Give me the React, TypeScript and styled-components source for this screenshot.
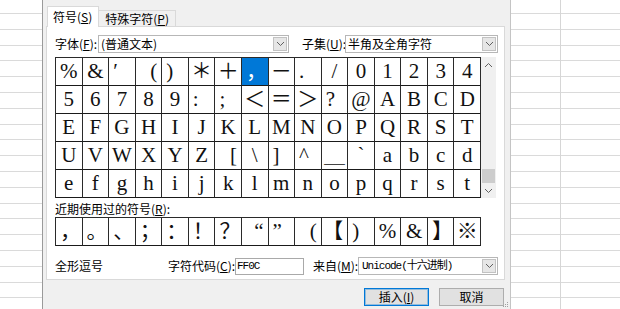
import React from "react";
import styled, { createGlobalStyle } from "styled-components";

type J = "s" | "c" | "e";
type Sym = { c: string; j: J; sel?: boolean };

const s = (c: string, j: J = "c", sel = false): Sym => ({ c, j, sel });
const plain = (str: string) => str.split("").map((c) => s(c));

const symbolRows: Sym[][] = [
  [
    s("%"), s("&"), s("′", "s"), s("(", "e"), s(")", "s"), s("＊"), s("＋"),
    s("，", "s", true), s("－"), s(".", "s"), s("/"), ...plain("01234"),
  ],
  [
    ...plain("56789"), s(":", "s"), s(";", "s"), s("＜"), s("＝"), s("＞"),
    s("?", "s"), s("@"), ...plain("ABCD"),
  ],
  plain("EFGHIJKLMNOPQRST"),
  [
    ...plain("UVWXYZ"), s("[", "e"), s("\\"), s("]", "s"), s("^", "s"),
    s("＿"), s("`"), ...plain("abcd"),
  ],
  plain("efghijklmnopqrst"),
];

const recent: Sym[] = [
  s("，", "s"), s("。", "s"), s("、", "s"), s("；", "s"), s("：", "s"),
  s("！", "s"), s("？", "s"), s("“", "e"), s("”", "s"), s("(", "e"),
  s("【", "e"), s(")", "s"), s("%"), s("&"), s("】", "s"), s("※"),
];

// spreadsheet row lines behind the dialog
const sheetRowHeights = (() => {
  const out: number[] = [];
  let prev = -1;
  for (let i = 0; i < 20; i++) {
    const line = Math.round(13 + 15.8 * i);
    out.push(line - prev);
    prev = line;
  }
  return out;
})();

const GlobalStyle = createGlobalStyle`
  html, body { margin: 0; padding: 0; background: #fff; }
  body {
    font-family: "Noto Sans CJK SC", "Noto Sans", sans-serif;
    font-size: 12px;
    color: #000;
    overflow: hidden;
  }
`;

const Page = styled.div`
  display: flex;
  width: 620px;
  height: 309px;
  overflow: hidden;
`;

const SheetCol = styled.div<{ $w?: number; $line?: boolean }>`
  display: flex;
  flex-direction: column;
  flex: ${(p) => (p.$w ? "none" : "1")};
  width: ${(p) => (p.$w ? `${p.$w}px` : "auto")};
  box-sizing: border-box;
  border-right: ${(p) => (p.$line ? "1px solid #d6d6d6" : "none")};
  background: #fff;
`;

const SheetRow = styled.div<{ $h: number }>`
  flex: none;
  height: ${(p) => p.$h}px;
  box-sizing: border-box;
  border-bottom: 1px solid #dadada;
`;

const Dialog = styled.div`
  position: relative;
  flex: none;
  width: 469px;
  height: 309px;
  box-sizing: border-box;
  border-left: 1px solid #9a9a9a;
  border-right: 1px solid #c4c4c4;
  background: #f0f0f0;
  padding: 6px 5px 0 3px;
`;

const TabStrip = styled.div`
  position: relative;
  z-index: 2;
  display: flex;
  align-items: flex-end;
  height: 20px;
  padding-left: 1px;
`;

const Tab = styled.div<{ $active?: boolean }>`
  box-sizing: border-box;
  height: ${(p) => (p.$active ? "21px" : "16px")};
  margin-bottom: ${(p) => (p.$active ? "-1px" : "0")};
  padding: ${(p) => (p.$active ? "2px 6px 0 5px" : "0 6px 0 6px")};
  border: 1px solid #d9d9d9;
  border-bottom: none;
  margin-left: ${(p) => (p.$active ? "0" : "-1px")};
  background: ${(p) => (p.$active ? "#fff" : "#f0f0f0")};
  line-height: 15px;
  font-size: 12px;
  white-space: nowrap;
`;

const Panel = styled.div`
  position: relative;
  z-index: 1;
  height: 254px;
  box-sizing: border-box;
  border: 1px solid #d9d9d9;
  background: #fff;
  padding: 8px 6px 0 8px;
  display: flex;
  flex-direction: column;
`;

const Row = styled.div<{ $mt?: number }>`
  display: flex;
  align-items: center;
  height: 18px;
  margin-top: ${(p) => p.$mt ?? 0}px;
`;

const Label = styled.span<{ $w?: number; $ml?: number }>`
  flex: none;
  width: ${(p) => (p.$w ? `${p.$w}px` : "auto")};
  margin-left: ${(p) => p.$ml ?? 0}px;
  line-height: 16px;
  white-space: nowrap;
`;

const Select = styled.div<{ $w?: number; $ml?: number }>`
  display: flex;
  flex: ${(p) => (p.$w ? "none" : "1")};
  width: ${(p) => (p.$w ? `${p.$w}px` : "auto")};
  margin-left: ${(p) => p.$ml ?? 0}px;
  height: 18px;
  box-sizing: border-box;
  border: 1px solid #b7b7b7;
  background: #fff;
`;

const SelectValue = styled.div<{ $mono?: boolean }>`
  flex: 1;
  padding-left: ${(p) => (p.$mono ? "3px" : "2px")};
  line-height: 16px;
  white-space: nowrap;
  overflow: hidden;
  font-family: ${(p) =>
    p.$mono
      ? `"Liberation Mono", "Noto Sans CJK SC", monospace`
      : `"Noto Sans CJK SC", sans-serif`};
  font-size: ${(p) => (p.$mono ? "11px" : "12px")};
  letter-spacing: ${(p) => (p.$mono ? "-1px" : "0")};
`;

const SelectArrow = styled.div`
  flex: none;
  width: 14px;
  margin: 1px;
  box-sizing: border-box;
  border: 1px solid #c2c2c2;
  background: #e6e6e6;
  display: flex;
  align-items: center;
  justify-content: center;
`;

const CharArea = styled.div`
  display: flex;
  margin-top: 4px;
`;

const CharGrid = styled.div`
  display: grid;
  grid-template-columns: repeat(16, 1fr);
  width: 426px;
  box-sizing: border-box;
  border-top: 1px solid #2a2a2a;
  border-left: 1px solid #2a2a2a;
`;

const Cell = styled.div<{ $j: J; $sel?: boolean }>`
  height: 28px;
  box-sizing: border-box;
  border-right: 1px solid #2a2a2a;
  border-bottom: 1px solid #1a1a1a;
  display: flex;
  align-items: center;
  justify-content: ${(p) =>
    p.$j === "s" ? "flex-start" : p.$j === "e" ? "flex-end" : "center"};
  padding: 0 4px;
  overflow: hidden;
  background: ${(p) => (p.$sel ? "#0078d7" : "#fff")};
  color: ${(p) => (p.$sel ? "#fff" : "#111")};
  font-family: "Liberation Serif", "Noto Sans CJK SC", serif;
  font-size: 21px;
  line-height: 1;
  white-space: nowrap;
`;

const ScrollBar = styled.div`
  display: flex;
  flex-direction: column;
  width: 15px;
  background: #f0f0f0;
`;

const ScrollBtn = styled.div`
  flex: none;
  height: 15px;
  display: flex;
  align-items: center;
  justify-content: center;
`;

const ScrollTrack = styled.div`
  flex: 1;
  display: flex;
  flex-direction: column;
  justify-content: flex-end;
  padding: 0 1px;
`;

const ScrollThumb = styled.div`
  height: 14px;
  background: #cdcdcd;
`;

const SectionLabel = styled.div`
  margin-top: 4px;
  height: 14px;
  line-height: 13px;
`;

const RecentGrid = styled(CharGrid)`
  margin-top: 1px;
`;

const Input = styled.div`
  flex: none;
  width: 69px;
  height: 17px;
  box-sizing: border-box;
  border: 1px solid #a9a9a9;
  padding-left: 1px;
  line-height: 15px;
  font-family: "Liberation Mono", monospace;
  font-size: 11px;
  letter-spacing: -1px;
  background: #fff;
`;

const ButtonRow = styled.div`
  display: flex;
  justify-content: flex-end;
  gap: 10px;
  margin-top: 8px;
  padding-right: 1px;
`;

const Button = styled.div<{ $default?: boolean }>`
  width: 65px;
  height: 18px;
  box-sizing: border-box;
  border: 1px solid ${(p) => (p.$default ? "#0078d7" : "#adadad")};
  box-shadow: ${(p) =>
    p.$default ? "inset 0 0 0 1px rgba(0, 120, 215, 0.35)" : "none"};
  background: #e1e1e1;
  display: flex;
  align-items: center;
  justify-content: center;
  line-height: 16px;
`;

const Grip = styled.svg`
  position: absolute;
  right: 1px;
  bottom: 1px;
`;

const Chevron = ({ up }: { up?: boolean }) => (
  <svg width="9" height="6" viewBox="0 0 9 6">
    <polyline
      points={up ? "1,5 4.5,1.5 8,5" : "1,1 4.5,4.5 8,1"}
      fill="none"
      stroke="#606060"
      strokeWidth="1"
    />
  </svg>
);

const Sheet = ({ w, line }: { w?: number; line?: boolean }) => (
  <SheetCol $w={w} $line={line}>
    {sheetRowHeights.map((h, i) => (
      <SheetRow key={i} $h={h} />
    ))}
  </SheetCol>
);

export default function App() {
  return (
    <>
      <GlobalStyle />
      <Page>
        <Sheet w={42} />
        <Dialog>
          <TabStrip>
            <Tab $active>
              符号(<u>S</u>)
            </Tab>
            <Tab>
              特殊字符(<u>P</u>)
            </Tab>
          </TabStrip>
          <Panel>
            <Row>
              <Label $w={43}>
                字体(<u>F</u>):
              </Label>
              <Select $w={191}>
                <SelectValue>(普通文本)</SelectValue>
                <SelectArrow>
                  <Chevron />
                </SelectArrow>
              </Select>
              <Label $w={43} $ml={13}>
                子集(<u>U</u>):
              </Label>
              <Select>
                <SelectValue>半角及全角字符</SelectValue>
                <SelectArrow>
                  <Chevron />
                </SelectArrow>
              </Select>
            </Row>

            <CharArea>
              <CharGrid>
                {symbolRows.flat().map((sym, i) => (
                  <Cell key={i} $j={sym.j} $sel={sym.sel}>
                    {sym.c}
                  </Cell>
                ))}
              </CharGrid>
              <ScrollBar>
                <ScrollBtn>
                  <Chevron up />
                </ScrollBtn>
                <ScrollTrack>
                  <ScrollThumb />
                </ScrollTrack>
                <ScrollBtn>
                  <Chevron />
                </ScrollBtn>
              </ScrollBar>
            </CharArea>

            <SectionLabel>
              近期使用过的符号(<u>R</u>):
            </SectionLabel>
            <RecentGrid>
              {recent.map((sym, i) => (
                <Cell key={i} $j={sym.j}>
                  {sym.c}
                </Cell>
              ))}
            </RecentGrid>

            <Row $mt={11}>
              <Label $w={113}>全形逗号</Label>
              <Label $w={67}>
                字符代码(<u>C</u>):
              </Label>
              <Input>FF0C</Input>
              <Label $w={45} $ml={9}>
                来自(<u>M</u>):
              </Label>
              <Select>
                <SelectValue $mono>Unicode(十六进制)</SelectValue>
                <SelectArrow>
                  <Chevron />
                </SelectArrow>
              </Select>
            </Row>
          </Panel>

          <ButtonRow>
            <Button $default>
              插入(<u>I</u>)
            </Button>
            <Button>取消</Button>
          </ButtonRow>

          <Grip width="8" height="8" viewBox="0 0 8 8">
            <rect x="6" y="2" width="1" height="1" fill="#a0a0a0" />
            <rect x="4" y="4" width="1" height="1" fill="#a0a0a0" />
            <rect x="6" y="4" width="1" height="1" fill="#a0a0a0" />
            <rect x="2" y="6" width="1" height="1" fill="#a0a0a0" />
            <rect x="4" y="6" width="1" height="1" fill="#a0a0a0" />
            <rect x="6" y="6" width="1" height="1" fill="#a0a0a0" />
          </Grip>
        </Dialog>
        <Sheet w={50} line />
        <Sheet />
      </Page>
    </>
  );
}
